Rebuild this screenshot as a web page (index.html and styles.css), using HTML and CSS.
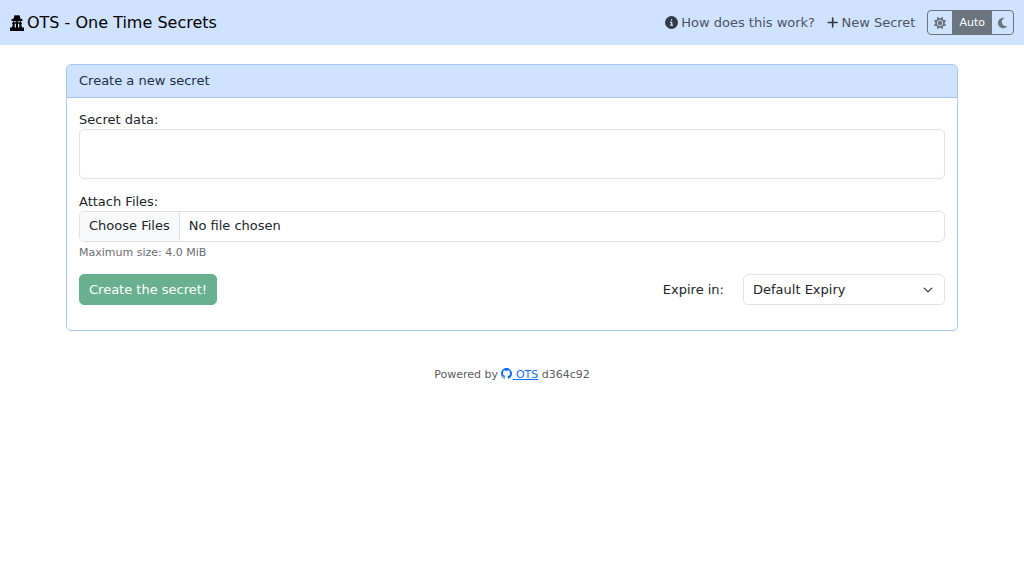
FILE: index.html
```html
<!DOCTYPE html>
<html lang="en">
  <head>
    <meta charset="UTF-8" />
    <meta name="viewport" content="width=device-width, initial-scale=1" />
    <title>OTS - One Time Secrets</title>
    <link rel="stylesheet" href="styles.css">
  </head>

  <body>
    <nav class="navbar">
      <a class="navbar-brand" href="#">
        <svg class="icon" viewBox="0 0 448 512" aria-hidden="true"><path d="M140 16C168-6 194 8 224 14c30-6 56-20 84 2l22 94 68 26v56h-46v36l34 28-26 60 28 84h60v112H0V400h60l28-84-26-60 34-28v-36H50v-56l68-26z"/><path fill="#cfe2ff" d="M122 200h78v28h-78zM248 200h78v28h-78zM150 280h42v116h-42zM256 280h42v116h-42z"/></svg>
        OTS - One Time Secrets
      </a>

      <div class="navbar-nav">
        <a class="nav-link" href="#explanation">
          <svg class="icon" viewBox="0 0 512 512" aria-hidden="true"><path d="M256 512A256 256 0 1 0 256 0a256 256 0 1 0 0 512zM216 336h24V272H216c-13.300 0-24-10.700-24-24s10.700-24 24-24h48c13.300 0 24 10.700 24 24v88h8c13.300 0 24 10.700 24 24s-10.700 24-24 24H216c-13.300 0-24-10.700-24-24s10.700-24 24-24zm40-208a32 32 0 1 1 0 64 32 32 0 1 1 0-64z"/></svg>
          How does this work?
        </a>
        <a class="nav-link" href="#new">
          <svg class="icon" viewBox="0 0 448 512" aria-hidden="true"><path d="M256 80c0-17.700-14.300-32-32-32s-32 14.300-32 32V224H48c-17.700 0-32 14.300-32 32s14.300 32 32 32H192V432c0 17.700 14.300 32 32 32s32-14.300 32-32V288H400c17.700 0 32-14.300 32-32s-14.300-32-32-32H256V80z"/></svg>
          New Secret
        </a>
        <div class="btn-group" role="group" aria-label="Theme">
          <input type="radio" class="btn-check" name="theme" id="theme-light" />
          <label class="btn-theme btn-icon" for="theme-light" aria-label="Light">
            <svg class="icon" viewBox="0 0 512 512" aria-hidden="true"><path d="M361.500 1.200c5 2.100 8.600 6.600 9.600 11.900L391 121l107.900 19.800c5.300 1 9.800 4.600 11.900 9.600s1.500 10.700-1.600 15.200L446.900 256l62.300 90.300c3.100 4.500 3.700 10.200 1.600 15.200s-6.600 8.600-11.900 9.600L391 391 371.100 498.900c-1 5.300-4.600 9.800-9.600 11.900s-10.700 1.500-15.200-1.600L256 446.900l-90.300 62.300c-4.500 3.100-10.200 3.700-15.200 1.600s-8.600-6.600-9.600-11.900L121 391 13.100 371.100c-5.300-1-9.800-4.600-11.900-9.600s-1.500-10.700 1.600-15.200L65.100 256 2.800 165.700c-3.100-4.500-3.700-10.200-1.600-15.200s6.600-8.600 11.900-9.600L121 121 140.900 13.100c1-5.300 4.600-9.800 9.600-11.900s10.700-1.500 15.200 1.600L256 65.100 346.300 2.800c4.500-3.100 10.200-3.700 15.200-1.600zM160 256a96 96 0 1 1 192 0 96 96 0 1 1 -192 0zm224 0a128 128 0 1 0 -256 0 128 128 0 1 0 256 0z"/></svg>
          </label>
          <input type="radio" class="btn-check" name="theme" id="theme-auto" checked />
          <label class="btn-theme" for="theme-auto">Auto</label>
          <input type="radio" class="btn-check" name="theme" id="theme-dark" />
          <label class="btn-theme btn-icon" for="theme-dark" aria-label="Dark">
            <svg class="icon" viewBox="0 0 384 512" aria-hidden="true"><path d="M223.500 32C100 32 0 132.300 0 256S100 480 223.500 480c60.600 0 115.500-24.200 155.800-63.400c5-4.900 6.300-12.500 3.100-18.700s-10.100-9.700-17-8.500c-9.800 1.700-19.800 2.600-30.100 2.600c-96.900 0-175.500-78.800-175.500-176c0-65.800 36-123.100 89.300-153.300c6.100-3.500 9.200-10.500 7.700-17.300s-7.300-11.900-14.300-12.500c-6.300-.5-12.600-.8-19-.8z"/></svg>
          </label>
        </div>
      </div>
    </nav>

    <main class="container">
      <div class="card">
        <div class="card-header">Create a new secret</div>
        <form class="card-body">
          <div class="field">
            <label for="secretData">Secret data:</label>
            <textarea id="secretData" class="form-control" rows="2"></textarea>
          </div>
          <div class="field">
            <label for="attachFiles">Attach Files:</label>
            <input type="file" id="attachFiles" class="form-control" multiple />
            <div class="form-text">Maximum size: 4.0 MiB</div>
          </div>
          <div class="actions">
            <button type="submit" class="btn-create" disabled>Create the secret!</button>
            <div class="expiry">
              <label for="expiry">Expire in:</label>
              <select id="expiry" class="form-select">
                <option>Default Expiry</option>
              </select>
            </div>
          </div>
        </form>
      </div>

      <footer class="footer">
        Powered by
        <a href="#"><svg class="icon" viewBox="0 0 16 16" aria-hidden="true"><path d="M8 0C3.580 0 0 3.580 0 8c0 3.540 2.290 6.530 5.470 7.590.4.07.55-.17.55-.38 0-.19-.01-.82-.01-1.490-2.010.37-2.530-.49-2.690-.94-.09-.23-.48-.94-.82-1.130-.28-.15-.68-.52-.01-.53.63-.01 1.080.58 1.230.82.72 1.210 1.870.87 2.330.66.07-.52.28-.87.51-1.070-1.780-.2-3.640-.89-3.640-3.950 0-.87.31-1.590.82-2.150-.08-.2-.36-1.020.08-2.120 0 0 .67-.21 2.200.82.64-.18 1.320-.27 2-.27.68 0 1.360.09 2 .27 1.530-1.040 2.200-.82 2.200-.82.44 1.100.16 1.920.08 2.120.51.56.82 1.270.82 2.150 0 3.070-1.870 3.750-3.650 3.950.29.25.54.73.54 1.480 0 1.070-.01 1.930-.01 2.200 0 .21.15.46.55.38A8.013 8.013 0 0 0 16 8c0-4.420-3.580-8-8-8z"/></svg> OTS</a>
        d364c92
      </footer>
    </main>
  </body>
</html>
```

FILE: styles.css
```css
*,
*:before,
*:after {
  box-sizing: border-box;
}

body {
  margin: 0;
  font-family: "DejaVu Sans", sans-serif;
  font-size: 13px;
  line-height: 20px;
  color: #212529;
  background-color: #fff;
}

input,
textarea,
select,
button {
  font: inherit;
  color: inherit;
}

.icon {
  height: 1em;
  fill: currentColor;
}

/* top bar */
.navbar {
  display: flex;
  align-items: center;
  justify-content: space-between;
  padding: 10px;
  background-color: #cfe2ff;
}

.navbar-brand {
  display: flex;
  align-items: center;
  gap: 3px;
  font-size: 16px;
  color: #000;
  text-decoration: none;
}

.navbar-nav {
  display: flex;
  align-items: center;
  gap: 12px;
}

.nav-link {
  display: flex;
  align-items: center;
  gap: 3px;
  color: #495466;
  text-decoration: none;
}

.nav-link .icon {
  color: #343b46;
}

.btn-group {
  display: flex;
  position: relative;
  border: 1px solid #6c757d;
  border-radius: 4px;
  overflow: hidden;
}

.btn-check {
  position: absolute;
  opacity: 0;
  pointer-events: none;
}

.btn-theme {
  display: flex;
  align-items: center;
  height: 23px;
  padding: 0 7px;
  font-size: 11px;
  color: #6c757d;
  cursor: pointer;
}

.btn-icon {
  padding: 0 6px;
  font-size: 12px;
}

.btn-check:checked + .btn-theme {
  color: #fff;
  background-color: #6c757d;
}

/* secret form */
.container {
  max-width: 912px;
  margin: 19px auto 0;
  padding: 0 10px;
}

.card {
  border: 1px solid #a9c8f5;
  border-radius: 5px;
}

.card-header {
  padding: 6px 12px;
  color: #212f45;
  background-color: #cfe2ff;
  border-bottom: 1px solid #a9c8f5;
  border-radius: 4px 4px 0 0;
}

.card-body {
  padding: 12px 12px 25px;
}

.field {
  margin-bottom: 13px;
}

.field label {
  display: block;
  line-height: 19px;
}

.form-control,
.form-select {
  display: block;
  width: 100%;
  padding: 4px 10px;
  border: 1px solid #dee2e6;
  border-radius: 5px;
  background-color: #fff;
}

textarea.form-control {
  height: 50px;
  resize: none;
}

input.form-control {
  height: 31px;
  overflow: hidden;
}

.form-control::file-selector-button {
  margin: -5px 9px -5px -10px;
  padding: 5px 9px;
  font: inherit;
  color: #212529;
  background-color: #f8f9fa;
  border: 0 solid #dee2e6;
  border-right-width: 1px;
}

.form-text {
  margin-top: 3px;
  font-size: 11px;
  line-height: 16px;
  color: #6a6d71;
}

.actions {
  display: flex;
  align-items: center;
  justify-content: space-between;
}

.btn-create {
  height: 31px;
  padding: 0 9px;
  color: #fff;
  background-color: #198754;
  border: 1px solid #198754;
  border-radius: 5px;
}

.btn-create:disabled {
  opacity: 0.65;
}

.expiry {
  display: flex;
  align-items: center;
  gap: 19px;
}

.form-select {
  width: 202px;
  height: 31px;
  padding: 0 30px 0 9px;
  appearance: none;
  background-image: url("data:image/svg+xml,%3Csvg xmlns='http://www.w3.org/2000/svg' viewBox='0 0 16 16'%3E%3Cpath fill='none' stroke='%23343a40' stroke-linecap='round' stroke-linejoin='round' stroke-width='2' d='m2 5 6 6 6-6'/%3E%3C/svg%3E");
  background-repeat: no-repeat;
  background-position: right 11px center;
  background-size: 10px;
}

.footer {
  margin-top: 34px;
  font-size: 11px;
  color: #595c5f;
  text-align: center;
}

.footer a {
  color: #0d6efd;
}

.footer .icon {
  vertical-align: -1px;
}
```
